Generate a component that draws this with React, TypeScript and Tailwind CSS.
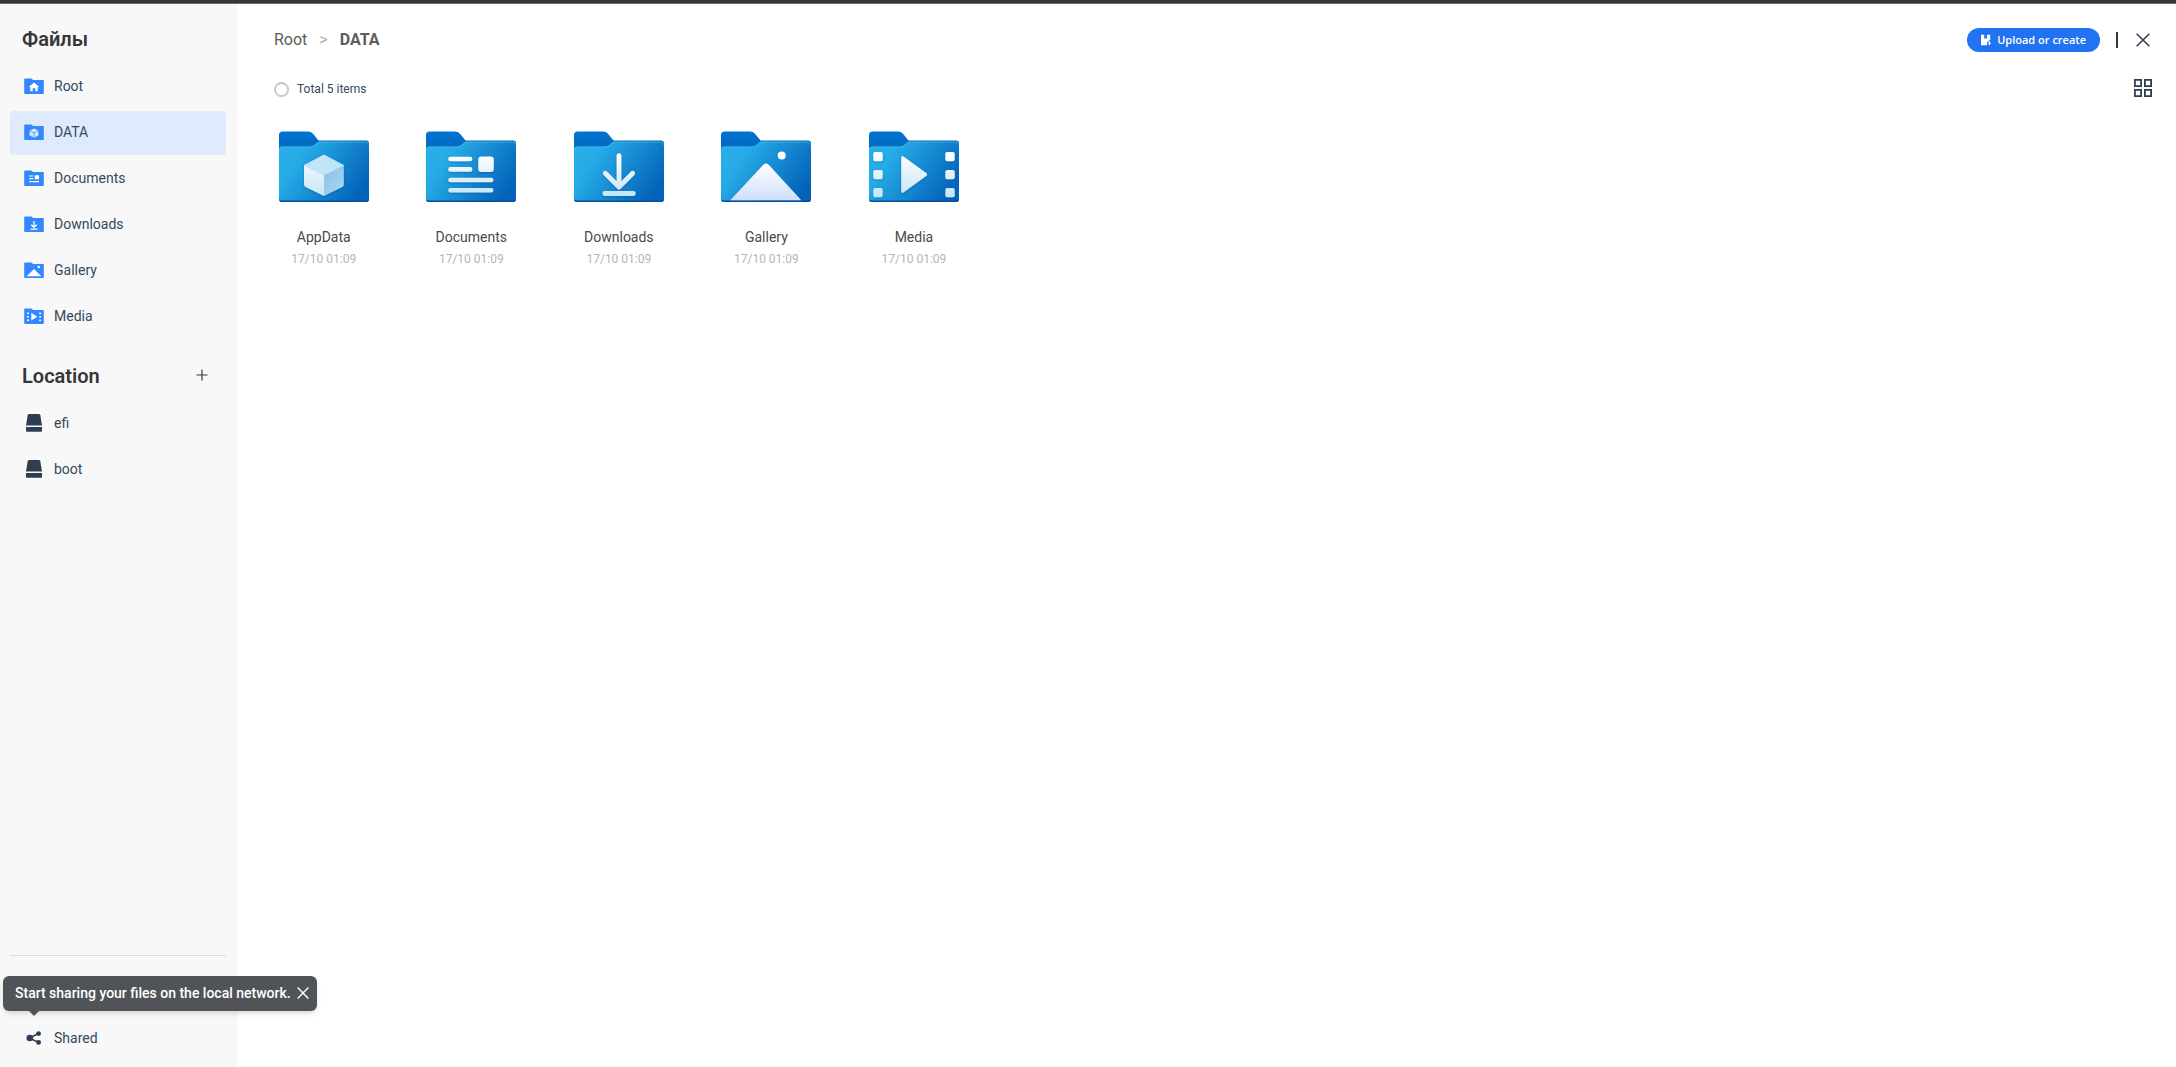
import React, { useState } from 'react';

type FolderKind = 'home' | 'data' | 'documents' | 'downloads' | 'gallery' | 'media';

const places: { name: string; kind: FolderKind }[] = [
  { name: 'Root', kind: 'home' },
  { name: 'DATA', kind: 'data' },
  { name: 'Documents', kind: 'documents' },
  { name: 'Downloads', kind: 'downloads' },
  { name: 'Gallery', kind: 'gallery' },
  { name: 'Media', kind: 'media' },
];

const locations = ['efi', 'boot'];

const files: { name: string; date: string; kind: FolderKind }[] = [
  { name: 'AppData', date: '17/10 01:09', kind: 'data' },
  { name: 'Documents', date: '17/10 01:09', kind: 'documents' },
  { name: 'Downloads', date: '17/10 01:09', kind: 'downloads' },
  { name: 'Gallery', date: '17/10 01:09', kind: 'gallery' },
  { name: 'Media', date: '17/10 01:09', kind: 'media' },
];

// Small flat folder used in the sidebar
const SmallFolder: React.FC<{ kind: FolderKind }> = ({ kind }) => (
  <svg width="20" height="16" viewBox="0 0 20 16" className="shrink-0" aria-hidden="true">
    <path d="M1 .5h6.3L9.2 2H19a.8.8 0 0 1 .8.8v12.4a.8.8 0 0 1-.8.8H1a.8.8 0 0 1-.8-.8V1.3A.8.8 0 0 1 1 .5Z" fill="#3388ff" />
    {kind === 'home' && <path d="M10 4.400 15.200 9h-1.500v4.200h-2.400v-3H8.700v3H6.300V9H4.800Z" fill="#fff" />}
    {kind === 'data' && (
      <>
        <path d="m10 4.500 4.400 2.200v4.900L10 13.800l-4.400-2.200V6.700Z" fill="#d6e7ff" />
        <path d="M6 7l4 2 4-2M10 9v4.500" fill="none" stroke="#3388ff" strokeWidth=".7" />
      </>
    )}
    {kind === 'documents' && (
      <>
        <path d="M5.200 6h4M5.200 8.700h4M5.200 11.600h9.800" stroke="#fff" strokeWidth="1.200" />
        <rect x="10.700" y="5.300" width="4.300" height="4" fill="#fff" />
      </>
    )}
    {kind === 'downloads' && (
      <path d="M10 5v6M7.300 8.700 10 11.300l2.700-2.600M6.500 13.200h7" fill="none" stroke="#fff" strokeWidth="1.200" />
    )}
    {kind === 'gallery' && (
      <>
        <path d="M10 7 17.300 14.300H2.700Z" fill="#fff" />
        <circle cx="14.800" cy="5" r="1.300" fill="#fff" />
      </>
    )}
    {kind === 'media' && (
      <>
        <path d="M7.300 4.800 13.200 8.700l-5.900 3.900Z" fill="#fff" />
        <path d="M3 4.400h1.800v1.500H3zM3 8h1.800v1.500H3zM3 11.600h1.800v1.500H3zM15.200 4.400H17v1.500h-1.800zM15.200 8H17v1.500h-1.800zM15.200 11.600H17v1.500h-1.800z" fill="#fff" />
      </>
    )}
  </svg>
);

const Glyph: React.FC<{ kind: FolderKind }> = ({ kind }) => {
  const white = `url(#glyph-${kind})`;
  switch (kind) {
    case 'data':
      return (
        <>
          <path d="M45 24 64.700 34.500 45 44.500 25 34.500Z" fill="#c0e5f8" stroke="#c0e5f8" strokeLinejoin="round" />
          <path d="M25 34.500 45 44.500V65L26.500 56Q25 55.300 25 53.500Z" fill={white} />
          <path d="M64.800 34.500 45 44.500V65l18.300-9q1.500-.7 1.500-2.500Z" fill="url(#cube-side)" />
        </>
      );
    case 'documents':
      return (
        <>
          <path d="M24.500 28h19.600M24.500 38.400h19.600M24.500 49h40.700M24.500 59.300h40.700" stroke={white} strokeWidth="4.600" strokeLinecap="round" />
          <rect x="52.300" y="25.500" width="15.500" height="15.500" rx="3" fill={white} />
        </>
      );
    case 'downloads':
      return (
        <path d="M45 24.700V56M31.300 42.300 45 56l13.700-13.700M30.800 62.500h28.600" fill="none" stroke={white} strokeWidth="4.800" strokeLinecap="round" strokeLinejoin="round" />
      );
    case 'gallery':
      return (
        <>
          <path d="M9.300 69.300 42.300 33.800Q45 31.200 47.700 33.800L80.300 69.300Z" fill="url(#mountain)" />
          <circle cx="60.700" cy="24.600" r="4" fill="#fff" />
        </>
      );
    case 'media':
      return (
        <>
          <path d="M32.200 27.200q0-3.300 2.600-1.400L57.200 42q1.900 1.500 0 3L34.800 61.200q-2.600 1.900-2.600-1.400Z" fill={white} />
          {[21, 39, 57].map((y) => (
            <React.Fragment key={y}>
              <rect x="4.300" y={y} width="9.400" height="9.200" rx="1.800" fill={white} />
              <rect x="76.300" y={y} width="9.400" height="9.200" rx="1.800" fill={white} />
            </React.Fragment>
          ))}
        </>
      );
    default:
      return null;
  }
};

const BigFolder: React.FC<{ kind: FolderKind }> = ({ kind }) => (
  <svg width="90" height="72" viewBox="0 0 90 72" aria-hidden="true">
    <defs>
      <linearGradient id={`front-${kind}`} gradientUnits="userSpaceOnUse" x1="8" y1="26" x2="74" y2="72">
        <stop offset="0" stopColor="#27aee9" />
        <stop offset=".15" stopColor="#25aae6" />
        <stop offset="1" stopColor="#0463b9" />
      </linearGradient>
      <linearGradient id={`tab-${kind}`} x1="0" y1="0" x2="0" y2="1">
        <stop offset="0" stopColor="#0074d1" />
        <stop offset="1" stopColor="#0560b2" />
      </linearGradient>
      <linearGradient id={`glyph-${kind}`} gradientUnits="userSpaceOnUse" x1="0" y1="22" x2="0" y2="66">
        <stop offset="0" stopColor="#ffffff" />
        <stop offset="1" stopColor="#c3e5f5" />
      </linearGradient>
      <linearGradient id="mountain" x1="0" y1="0" x2="0" y2="1">
        <stop offset="0" stopColor="#ffffff" />
        <stop offset="1" stopColor="#cfdffa" />
      </linearGradient>
      <linearGradient id="cube-side" x1="0" y1="0" x2="1" y2="1">
        <stop offset="0" stopColor="#8bbde9" />
        <stop offset="1" stopColor="#a9dbef" />
      </linearGradient>
      <filter id={`shadow-${kind}`} x="-20%" y="-20%" width="140%" height="150%">
        <feDropShadow dx="0" dy="1" stdDeviation="1" floodColor="#04488f" floodOpacity=".45" />
      </filter>
    </defs>
    <path d="M0 4Q0 .5 3.500.5H29Q32 .5 34 2.700L39.500 9.500H87Q90 9.500 90 12.500V30H0Z" fill={`url(#tab-${kind})`} />
    <path d="M0 18.500Q0 15.500 3 15.500H31Q33.500 15.500 35.500 13.800L38 11.600Q39.500 10.400 41.500 10.400H87Q90 10.400 90 13.400V68Q90 71 87 71H3Q0 71 0 68Z" fill={`url(#front-${kind})`} />
    <path d="M.5 19Q.5 16 3.500 16H31Q34 16 36 14.200L38.200 12.300Q39.700 11.200 41.500 11.200H86.500Q89.500 11.200 89.500 14" fill="none" stroke="#5cc4f5" strokeOpacity=".5" />
    <path d="M0 67.500Q0 71 3 71H87Q90 71 90 67.500 89.500 69.400 87 69.400H3Q.5 69.400 0 67.500Z" fill="#044f9c" />
    <g filter={kind === 'gallery' ? undefined : `url(#shadow-${kind})`}>
      <Glyph kind={kind} />
    </g>
  </svg>
);

const DriveIcon = () => (
  <svg width="20" height="20" viewBox="0 0 20 20" className="shrink-0" fill="#2c3e50" aria-hidden="true">
    <path d="M5.300 1h9.400q1.300 0 1.600 1.300L18 12.500H2L3.700 2.300Q4 1 5.300 1Z" />
    <path d="M2 14h16v3.800q0 1-1 1H3q-1 0-1-1Z" />
  </svg>
);

const ShareIcon = () => (
  <svg width="20" height="20" viewBox="0 0 20 20" className="shrink-0" fill="#2c3e50" aria-hidden="true">
    <path d="m14.500 5.500-9 4.500 9 4.500" fill="none" stroke="#2c3e50" strokeWidth="1.500" />
    <circle cx="5.800" cy="10" r="3.300" />
    <circle cx="14.600" cy="5.600" r="2.400" />
    <circle cx="14.600" cy="14.400" r="2.400" />
  </svg>
);

const CloseIcon: React.FC<{ size: number; width: number }> = ({ size, width }) => (
  <svg width={size} height={size} viewBox="0 0 14 14" fill="none" stroke="currentColor" strokeWidth={width} aria-hidden="true">
    <path d="M.700.700l12.600 12.600M13.300.700.700 13.300" />
  </svg>
);

const itemClass = 'flex h-11 items-center gap-2.5 rounded px-3.5 pb-0.5 text-sm text-[#34495e]';

export default function App() {
  const [active, setActive] = useState('DATA');
  const [showTip, setShowTip] = useState(true);
  const [allSelected, setAllSelected] = useState(false);

  return (
    <div className="flex min-h-screen flex-col bg-white font-['Roboto',sans-serif]">
      <div className="h-1 shrink-0 border-b border-[#6b6b6b] bg-[#363636]" />

      <div className="flex flex-1">
        {/* Sidebar */}
        <aside className="flex w-[238px] shrink-0 flex-col bg-[#f8f8f8] pr-3 pl-2.5 pb-1.5">
          <h1 className="mt-5 mb-[11px] px-3 text-xl leading-[30px] font-semibold text-[#363636]">Файлы</h1>
          <nav className="flex flex-col gap-0.5">
            {places.map((place) => (
              <a
                key={place.name}
                href={`#${place.name}`}
                onClick={() => setActive(place.name)}
                className={`${itemClass} ${active === place.name ? 'bg-[#deebfc]' : 'hover:bg-gray-200'}`}
              >
                <SmallFolder kind={place.kind} />
                {place.name}
              </a>
            ))}
          </nav>

          <div className="mt-[22px] mb-[11px] flex items-center justify-between px-3">
            <h2 className="text-xl leading-[30px] font-semibold text-[#363636]">Location</h2>
            <button type="button" aria-label="Add location" className="flex size-6 items-center justify-center pb-0.5 text-[#2c3e50]">
              <svg width="12" height="12" viewBox="0 0 12 12" stroke="currentColor" strokeWidth="1.200" aria-hidden="true">
                <path d="M6 .500v11M.500 6h11" />
              </svg>
            </button>
          </div>
          <nav className="flex flex-col gap-0.5">
            {locations.map((name) => (
              <a key={name} href={`#${name}`} className={`${itemClass} hover:bg-gray-200`}>
                <DriveIcon />
                {name}
              </a>
            ))}
          </nav>

          <div className="relative mt-auto border-t border-[#dbdbdb] pt-[61px]">
            {showTip && (
              <div className="absolute top-5 -left-[7px] z-10 flex h-[35px] items-center gap-1.5 rounded-md bg-[#505459] pr-2 pb-0.5 pl-3 text-sm font-medium whitespace-nowrap text-white shadow-md">
                Start sharing your files on the local network.
                <button type="button" aria-label="Close hint" onClick={() => setShowTip(false)}>
                  <CloseIcon size={12} width={1.6} />
                </button>
                <svg width="10" height="5" viewBox="0 0 10 5" className="absolute top-full left-[26px]" fill="#505459" aria-hidden="true">
                  <path d="M0 0h10L5 5Z" />
                </svg>
              </div>
            )}
            <a href="#shared" className={`${itemClass} hover:bg-gray-200`}>
              <ShareIcon />
              Shared
            </a>
          </div>
        </aside>

        {/* Content */}
        <main className="min-w-0 flex-1 pr-2 pl-3">
          <header className="flex h-[70px] items-center justify-between pt-0.5 pr-4 pl-6">
            <nav className="flex items-center text-base text-[#5c5c5c]">
              <a href="#root">Root</a>
              <span className="px-3 text-[#b0b0b0]">&gt;</span>
              <a href="#data" className="font-bold">DATA</a>
            </nav>
            <div className="flex items-center gap-4">
              <button type="button" className="flex h-6 items-center gap-1.5 rounded-full bg-[#2273f3] px-3.5 font-['Open_Sans',sans-serif] text-[11px] font-semibold text-white">
                <svg width="10" height="12" viewBox="0 0 10 12" fill="#fff" aria-hidden="true">
                  <path d="M0 .700h3.200v4.300l1.400-1 1.400 1V.700h3.200v5.500H7.600v1.500H6.100v3.600H0Z" />
                  <path d="M8 7.300h1v1.400h1v1.100H9v1.400H8V9.800H6.900V8.700H8Z" />
                </svg>
                Upload or create
              </button>
              <span className="h-4 w-0.5 bg-[#363636]" />
              <button type="button" aria-label="Close" className="flex w-[18px] justify-center text-[#2c3e50]">
                <CloseIcon size={14} width={1.5} />
              </button>
            </div>
          </header>

          <div className="flex h-[30px] items-center justify-between pr-4 pl-6">
            <label className="flex items-center gap-2 text-xs text-[#34495e]">
              <input
                type="checkbox"
                checked={allSelected}
                onChange={(e) => setAllSelected(e.target.checked)}
                className="size-[15px] appearance-none rounded-full border-2 border-[#c8c8c8] checked:bg-[#2273f3]"
              />
              Total 5 items
            </label>
            <button type="button" aria-label="Grid view" className="pb-0.5 text-[#2c3e50]">
              <svg width="18" height="18" viewBox="0 0 18 18" fill="none" stroke="currentColor" strokeWidth="1.800" aria-hidden="true">
                <path d="M.900.900h6.200v6.200H.900zM10.900.900h6.200v6.200h-6.200zM.900 10.900h6.200v6.200H.900zM10.900 10.900h6.200v6.200h-6.200z" />
              </svg>
            </button>
          </div>

          <div className="mt-[27px] grid grid-cols-[repeat(auto-fill,minmax(140px,1fr))]">
            {files.map((file) => (
              <button key={file.name} type="button" className="flex flex-col items-center">
                <BigFolder kind={file.kind} />
                <span className="mt-6 text-sm leading-5 text-[#4a4a4a]">{file.name}</span>
                <span className="mt-0.5 text-xs leading-5 text-[#b5b5b5]">{file.date}</span>
              </button>
            ))}
          </div>
        </main>
      </div>
    </div>
  );
}
